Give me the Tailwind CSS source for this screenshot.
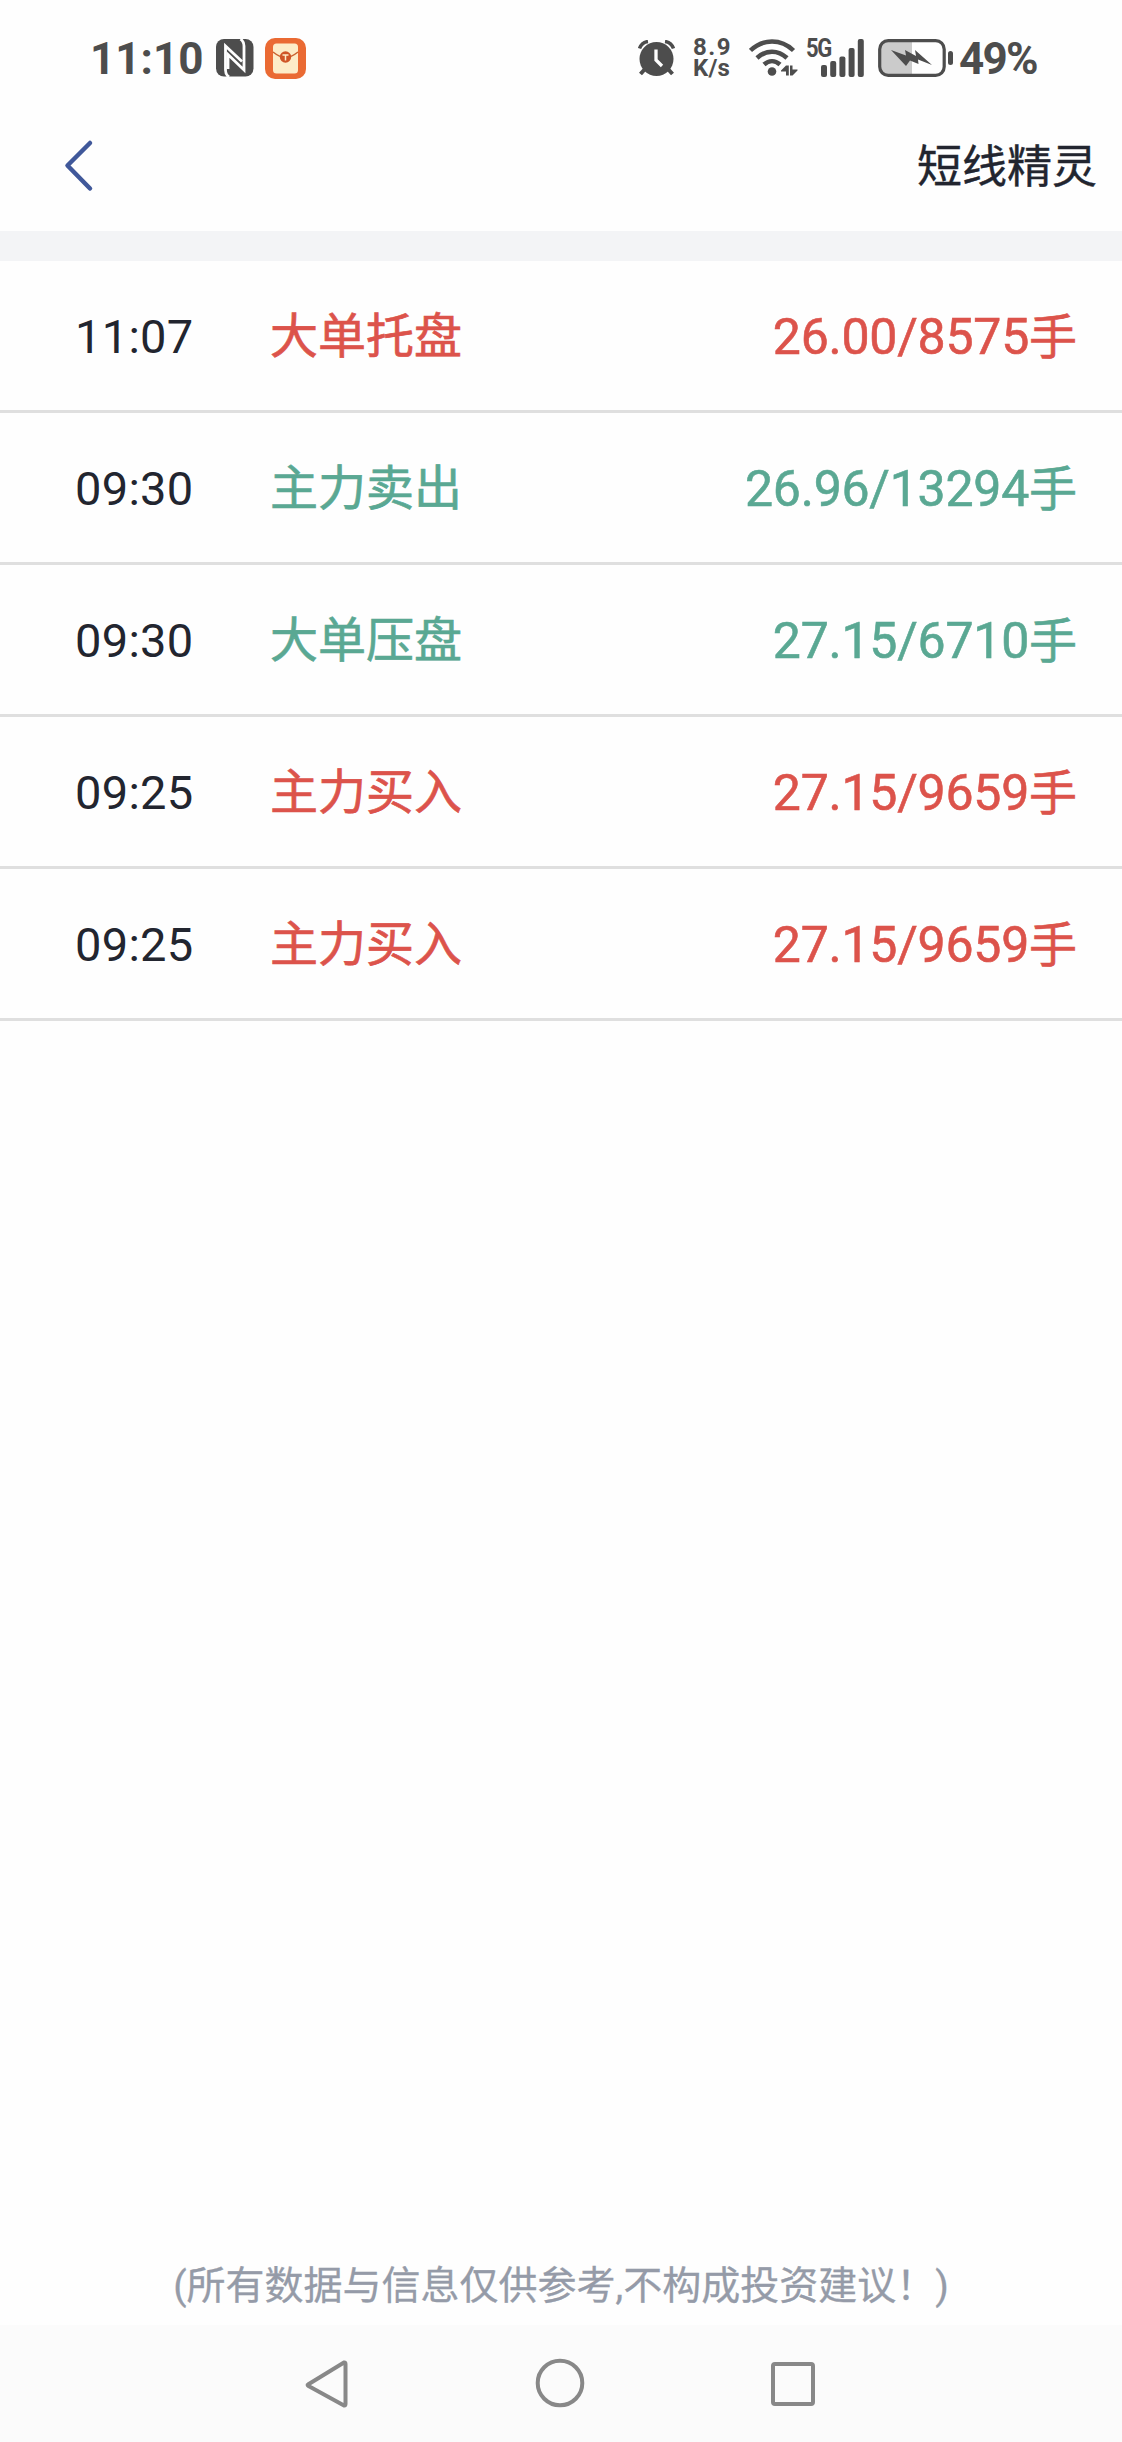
<!DOCTYPE html>
<html lang="zh-CN">
<head>
    <meta charset="UTF-8">
    <meta name="viewport" content="width=device-width, initial-scale=1.0">
    <title>短线精灵</title>
    <script src="https://cdn.jsdelivr.net/npm/@tailwindcss/browser@4"></script>
</head>
<body class="bg-white">
<div class="flex flex-col w-full h-[2442px] bg-[#fefefe] font-[Roboto,'Noto_Sans_CJK_SC',sans-serif] text-[#22252f] overflow-hidden">

    <!-- Status bar -->
    <div class="flex items-center shrink-0 h-[101px] pt-[15px] pl-[90px] pr-[84px] text-[#4d4d4d] whitespace-nowrap">
        <span class="w-[126px] pt-[2px] text-[44px] leading-none font-bold">11:10</span>
        <!-- NFC -->
        <svg class="w-[38px] h-[38px] shrink-0" viewBox="0 0 38 38">
            <rect width="37.500" height="37.500" rx="8" fill="#4d4d4d"/>
            <path d="M13 38C10 36 9.500 34 9.500 31V7L26 22.500" fill="none" stroke="#fefefe" stroke-width="2.800"/>
            <path d="M24.500 0C27.500 2 28 4 28 7V31L12 15.500V30" fill="none" stroke="#fefefe" stroke-width="2.800"/>
        </svg>
        <!-- Envelope app badge -->
        <svg class="w-[41px] h-[41px] shrink-0 ml-[11px]" viewBox="0 0 41 41">
            <rect width="41" height="41" rx="10" fill="#ea6a33"/>
            <rect x="8" y="5.500" width="25" height="30" rx="3.500" fill="#fdecc8"/>
            <path d="M8 14C13 18 17 19.500 20.500 19.500S28 18 33 14" fill="none" stroke="#c9622f" stroke-width="1.500"/>
            <circle cx="20.500" cy="19" r="5.700" fill="#cf5527"/>
            <path d="M17.500 17H23.500M20.500 17V22.500" stroke="#fdecc8" stroke-width="1.500"/>
        </svg>

        <!-- Alarm -->
        <svg class="w-[37px] h-[36px] shrink-0 ml-auto" viewBox="0 0 37 36" fill="none" stroke="#4d4d4d">
            <circle cx="18.500" cy="19" r="17" fill="#4d4d4d" stroke="none"/>
            <path d="M1.500 8.500C3 4.500 6 2 10 1.500M35.500 8.500C34 4.500 31 2 27 1.500" stroke-width="3.500"/>
            <path d="M7 29L2.500 34M30 29L34.500 34" stroke-width="4"/>
            <path d="M18 9.500V20L24 26" stroke="#fefefe" stroke-width="3.300"/>
        </svg>
        <!-- Network speed -->
        <div class="flex flex-col w-[41px] ml-[18px] text-[24px] leading-[21px] font-bold">
            <span class="tracking-[1.500px]">8.9</span>
            <span class="tracking-[0.200px]">K/s</span>
        </div>
        <!-- Wifi -->
        <svg class="w-[49px] h-[38px] shrink-0 ml-[15px]" viewBox="0 0 49 38" fill="none" stroke="#4d4d4d" stroke-width="4.500">
            <path d="M1.500 11.500C14 -0.500 32 -0.500 44.500 11.500"/>
            <path d="M8 19C17 10.500 29 10.500 38 19"/>
            <path d="M15 25.500C20 21 26 21 31 25.500"/>
            <circle cx="23" cy="32.500" r="4.300" fill="#4d4d4d" stroke="none"/>
            <path d="M37 36.500V26.500H39.800V36.500ZM37 26.500L32 31.500V32.500H37ZM41 26.500V36.500H43.500L48.500 31.500V30.500H43.500V26.500Z" fill="#4d4d4d" stroke="none"/>
        </svg>
        <!-- Mobile signal -->
        <div class="relative w-[57px] h-[38px] shrink-0 ml-[9px]">
            <span class="absolute left-[-1px] top-0 text-[25px] leading-[20px] font-bold tracking-[-1.500px] origin-left scale-x-[0.88]">5G</span>
            <svg class="w-[57px] h-[38px]" viewBox="0 0 57 38" fill="#4d4d4d">
                <rect x="14" y="26" width="6" height="12" rx="2"/>
                <rect x="23.200" y="22" width="6" height="16" rx="2"/>
                <rect x="32.400" y="17.500" width="6" height="20.500" rx="2"/>
                <rect x="41.600" y="9" width="6" height="29" rx="2"/>
                <rect x="50.800" y="0" width="6" height="38" rx="2"/>
            </svg>
        </div>
        <!-- Battery -->
        <svg class="w-[76px] h-[38px] shrink-0 ml-[14px]" viewBox="0 0 76 38">
            <path d="M9 2H34V36H9Q2 36 2 29V9Q2 2 9 2Z" fill="#cbcbcb"/>
            <rect x="1.700" y="1.700" width="64.500" height="34.600" rx="8.500" fill="none" stroke="#4d4d4d" stroke-width="3.200"/>
            <rect x="70" y="12" width="5" height="14" rx="2.500" fill="#4d4d4d"/>
            <path d="M13 11L28 16.500L27 11L38 17L37 11L54 26L40 20.500L40.500 25L32 21.500L28 27Z" fill="#4d4d4d"/>
        </svg>
        <span class="w-[79px] pt-[2px] ml-[5px] text-[44px] leading-none font-bold tracking-[-1.800px]">49%</span>
    </div>

    <!-- Title bar -->
    <div class="flex items-center justify-between shrink-0 h-[130px] pl-[64px] pr-[25px]">
        <svg class="w-[30px] h-[54px]" viewBox="0 0 30 54">
            <path d="M26 4L3.500 26.500L26 49.500" fill="none" stroke="#40589a" stroke-width="4.500" stroke-linecap="round" stroke-linejoin="round"/>
        </svg>
        <h1 class="pt-[3px] text-[45px] leading-none [-webkit-text-stroke:0.4px]">短线精灵</h1>
    </div>
    <div class="shrink-0 h-[30px] bg-[#f3f4f6]"></div>

    <!-- Alerts -->
    <ul class="text-[48px]">
        <li class="flex items-center h-[152px] pt-[3px] pl-[75px] pr-[45px] border-b-3 border-[#dfdfdf]">
            <span class="w-[195px] text-[47px] tracking-[0.300px]">11:07</span>
            <span class="text-[#dc534b] [-webkit-text-stroke:0.7px]">大单托盘</span>
            <span class="ml-auto text-[#dc534b] [-webkit-text-stroke:0.6px]"><span class="text-[50px] tracking-[-0.250px]">26.00/8575</span>手</span>
        </li>
        <li class="flex items-center h-[152px] pt-[3px] pl-[75px] pr-[45px] border-b-3 border-[#dfdfdf]">
            <span class="w-[195px] text-[47px] tracking-[0.300px]">09:30</span>
            <span class="text-[#5aa893] [-webkit-text-stroke:0.7px]">主力卖出</span>
            <span class="ml-auto text-[#5aa893] [-webkit-text-stroke:0.6px]"><span class="text-[50px] tracking-[-0.250px]">26.96/13294</span>手</span>
        </li>
        <li class="flex items-center h-[152px] pt-[3px] pl-[75px] pr-[45px] border-b-3 border-[#dfdfdf]">
            <span class="w-[195px] text-[47px] tracking-[0.300px]">09:30</span>
            <span class="text-[#5aa893] [-webkit-text-stroke:0.7px]">大单压盘</span>
            <span class="ml-auto text-[#5aa893] [-webkit-text-stroke:0.6px]"><span class="text-[50px] tracking-[-0.250px]">27.15/6710</span>手</span>
        </li>
        <li class="flex items-center h-[152px] pt-[3px] pl-[75px] pr-[45px] border-b-3 border-[#dfdfdf]">
            <span class="w-[195px] text-[47px] tracking-[0.300px]">09:25</span>
            <span class="text-[#dc534b] [-webkit-text-stroke:0.7px]">主力买入</span>
            <span class="ml-auto text-[#dc534b] [-webkit-text-stroke:0.6px]"><span class="text-[50px] tracking-[-0.250px]">27.15/9659</span>手</span>
        </li>
        <li class="flex items-center h-[152px] pt-[3px] pl-[75px] pr-[45px] border-b-3 border-[#dfdfdf]">
            <span class="w-[195px] text-[47px] tracking-[0.300px]">09:25</span>
            <span class="text-[#dc534b] [-webkit-text-stroke:0.7px]">主力买入</span>
            <span class="ml-auto text-[#dc534b] [-webkit-text-stroke:0.6px]"><span class="text-[50px] tracking-[-0.250px]">27.15/9659</span>手</span>
        </li>
    </ul>

    <!-- Disclaimer -->
    <p class="mt-auto mb-[9px] text-center text-[39px] leading-[60px] text-[#959ba8] whitespace-nowrap [-webkit-text-stroke:0.3px]">(所有数据与信息仅供参考,不构成投资建议！)</p>

    <!-- System navigation -->
    <div class="flex items-center shrink-0 h-[117px] pl-[305px] bg-[#fbfbfb]">
        <svg class="w-[44px] h-[50px]" viewBox="0 0 44 50">
            <path d="M3 25.500L39 3.500Q40.500 3 40.500 5V45Q40.500 47 39 46.500L3.500 27Q2 26 3 25.500Z" fill="none" stroke="#888" stroke-width="4" stroke-linejoin="round"/>
        </svg>
        <svg class="w-[50px] h-[50px] ml-[186px] mb-[2px]" viewBox="0 0 50 50">
            <circle cx="25" cy="25" r="22.300" fill="none" stroke="#888" stroke-width="4"/>
        </svg>
        <div class="w-[44px] h-[44px] ml-[186px] border-4 border-[#888] rounded-[4px]"></div>
    </div>
</div>
</body>
</html>
